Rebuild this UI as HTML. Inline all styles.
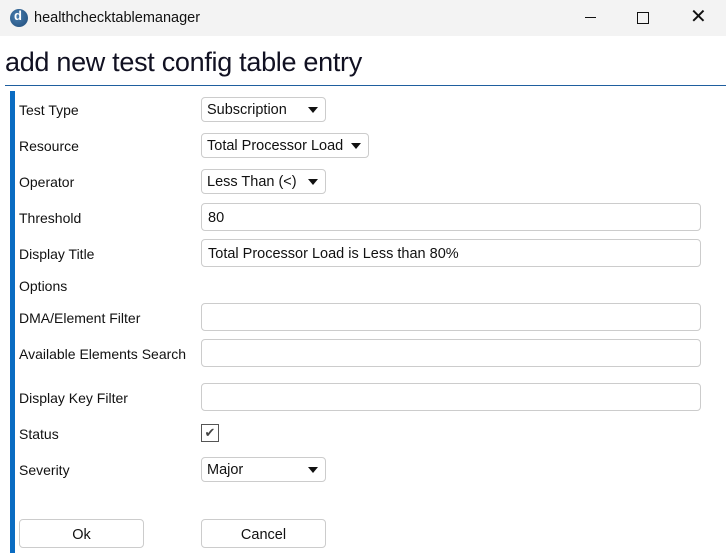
<!DOCTYPE html><html><head><style>
body{margin:0;width:726px;height:553px;background:#fff;font-family:"Segoe UI","Liberation Sans",sans-serif;position:relative;overflow:hidden;color:#111}
.a{position:absolute}
.tb{left:0;top:0;width:726px;height:36px;background:#f3f3f3}
.lbl{position:absolute;left:19px;font-size:14px;line-height:18px}
.dd{position:absolute;left:201px;height:25px;border:1px solid #ccc;border-radius:4px;box-sizing:border-box;font-size:14.5px;line-height:25px;padding-left:5px;background:#fff}
.dd:after{content:"";position:absolute;right:7px;top:9px;border-left:5px solid transparent;border-right:5px solid transparent;border-top:6px solid #111}
.tx{position:absolute;left:201px;width:500px;height:28px;border:1px solid #ccc;border-radius:4px;box-sizing:border-box;font-size:14.5px;line-height:29px;padding-left:6px}
.bt{position:absolute;top:519px;height:29px;width:125px;border:1px solid #ccc;border-radius:4px;box-sizing:border-box;text-align:center;font-size:14.5px;line-height:30px}
</style></head><body>
<div class="a tb"></div>
<div class="a" style="left:10px;top:9px;width:18px;height:18px;border-radius:50%;background:radial-gradient(circle at 40% 40%,#4a7fb0,#1d4a78)"></div>
<div class="a" style="left:14px;top:8px;color:#fff;font-weight:bold;font-size:13px">d</div>
<div class="a" style="left:34px;top:10px;font-size:14.5px">healthchecktablemanager</div>
<div class="a" style="left:585px;top:17px;width:11px;height:1px;background:#111"></div>
<div class="a" style="left:637px;top:12px;width:10px;height:10px;border:1px solid #111"></div>
<div class="a" style="left:690px;top:4px;font-size:20px;font-weight:200">✕</div>
<div class="a" style="left:5px;top:47px;font-size:27px;color:#112;letter-spacing:-0.3px">add new test config table entry</div>
<div class="a" style="left:5px;top:85px;width:721px;height:1px;background:#1f5f9f"></div>
<div class="a" style="left:10px;top:91px;width:5px;height:462px;background:#0a6cc2"></div>
<div class="lbl" style="top:101px">Test Type</div>
<div class="lbl" style="top:137px">Resource</div>
<div class="lbl" style="top:173px">Operator</div>
<div class="lbl" style="top:209px">Threshold</div>
<div class="lbl" style="top:245px">Display Title</div>
<div class="lbl" style="top:277px">Options</div>
<div class="lbl" style="top:309px">DMA/Element Filter</div>
<div class="lbl" style="top:345px">Available Elements Search</div>
<div class="lbl" style="top:389px">Display Key Filter</div>
<div class="lbl" style="top:425px">Status</div>
<div class="lbl" style="top:461px">Severity</div>
<div class="dd" style="top:97px;width:125px">Subscription</div>
<div class="dd" style="top:133px;width:168px">Total Processor Load</div>
<div class="dd" style="top:169px;width:125px">Less Than (&lt;)</div>
<div class="tx" style="top:203px">80</div>
<div class="tx" style="top:239px">Total Processor Load is Less than 80%</div>
<div class="tx" style="top:303px"></div>
<div class="tx" style="top:339px"></div>
<div class="tx" style="top:383px"></div>
<div class="a" style="left:201px;top:424px;width:18px;height:18px;border:1px solid #555;box-sizing:border-box;font-size:13px;line-height:16px;text-align:center;color:#444">✔</div>
<div class="dd" style="top:457px;width:125px">Major</div>
<div class="bt" style="left:19px">Ok</div>
<div class="bt" style="left:201px">Cancel</div>
</body></html>
